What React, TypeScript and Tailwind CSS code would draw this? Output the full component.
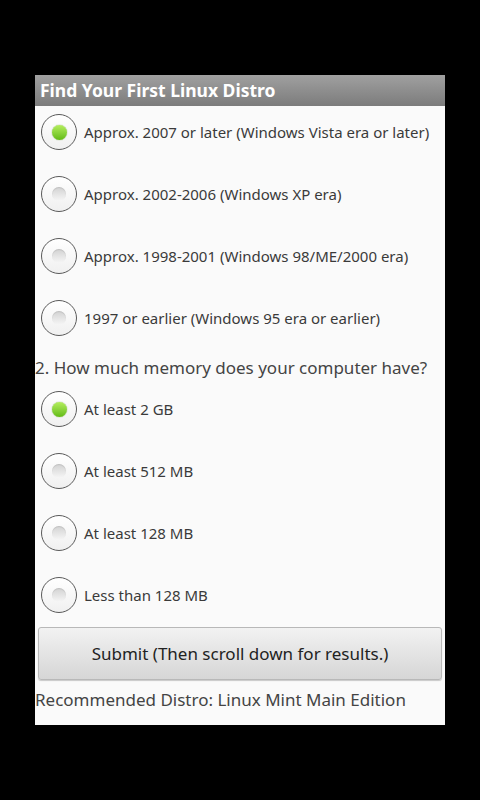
import { FC } from "react";

type Option = { label: string; checked?: boolean };

const yearOptions: Option[] = [
	{ label: "Approx. 2007 or later (Windows Vista era or later)", checked: true },
	{ label: "Approx. 2002-2006 (Windows XP era)" },
	{ label: "Approx. 1998-2001 (Windows 98/ME/2000 era)" },
	{ label: "1997 or earlier (Windows 95 era or earlier)" },
];

const memoryOptions: Option[] = [
	{ label: "At least 2 GB", checked: true },
	{ label: "At least 512 MB" },
	{ label: "At least 128 MB" },
	{ label: "Less than 128 MB" },
];

const Radio: FC<{ checked?: boolean }> = ({ checked }) => (
	<div className="w-[36px] h-[36px] rounded-full border-[1.5px] border-[#5a5a5a] bg-gradient-to-b from-white to-[#f0f0f0] flex items-center justify-center shrink-0">
		{checked ? (
			<div className="w-[15px] h-[15px] rounded-full bg-gradient-to-b from-[#b4ee5c] to-[#62bb10] shadow-[0_0_1px_#4a8a10]" />
		) : (
			<div className="w-[14px] h-[14px] rounded-full bg-gradient-to-b from-[#d2d2d2] to-[#f6f6f6] shadow-[inset_0_1px_1px_rgba(0,0,0,0.1)]" />
		)}
	</div>
);

const OptionList: FC<{ options: Option[] }> = ({ options }) => (
	<div className="flex flex-col gap-[10px]">
		{options.map(option => (
			<div key={option.label} className="h-[52px] flex items-center gap-[7px] pl-[6px]">
				<Radio checked={option.checked} />
				<span className="text-[15px] text-[#3a3a3a]">{option.label}</span>
			</div>
		))}
	</div>
);

const App: FC = () => {
	return (
		<div className="w-[480px] h-[800px] bg-black pt-[75px] pl-[35px]" style={{ fontFamily: '"Noto Sans", "Open Sans", sans-serif' }}>
			<div className="w-[410px] h-[650px] bg-[#fafafa] flex flex-col">
				<div className="h-[31px] bg-gradient-to-b from-[#a0a0a0] to-[#7c7c7c] flex items-center pl-[5px]">
					<h1 className="text-[17.5px] font-bold text-white leading-none">Find Your First Linux Distro</h1>
				</div>
				<OptionList options={yearOptions} />
				<p className="mt-[12px] h-[24px] leading-[24px] text-[17px] whitespace-nowrap text-[#444]">2. How much memory does your computer have?</p>
				<div className="mt-[3px]">
					<OptionList options={memoryOptions} />
				</div>
				<button className="mt-[6px] mx-[3px] h-[53px] rounded-[3px] border border-[#b8b8b8] bg-gradient-to-b from-[#f2f2f2] to-[#d6d6d6] shadow-[0_1px_1px_rgba(0,0,0,0.2)] text-[17px] text-[#222]">
					Submit (Then scroll down for results.)
				</button>
				<p className="mt-[8px] h-[24px] leading-[24px] text-[17px] whitespace-nowrap text-[#444]">Recommended Distro: Linux Mint Main Edition</p>
			</div>
		</div>
	);
};

export default App;
